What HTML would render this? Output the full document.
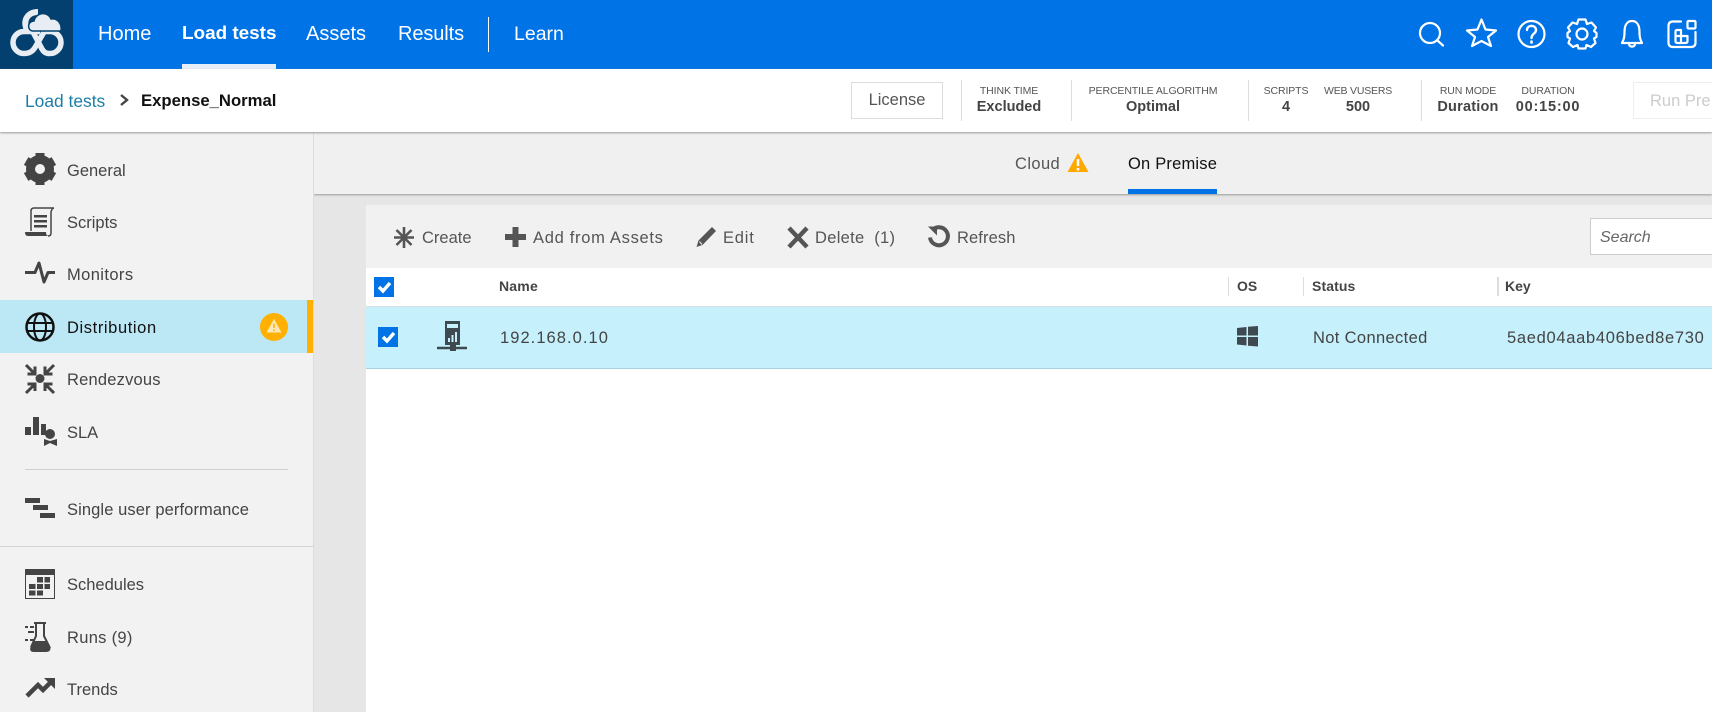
<!DOCTYPE html>
<html><head><meta charset="utf-8"><style>
html,body{margin:0;padding:0;width:1712px;height:712px;overflow:hidden;background:#fff;font-family:"Liberation Sans",Arial,sans-serif}
div,span,svg{position:absolute}
.t{white-space:nowrap;line-height:24px;height:24px}
.nav{color:#fff;font-size:20px;top:22px}
.sb{left:67px;font-size:16.5px;color:#444}
.tb{font-size:16.5px;color:#555;top:226px}
.lab{font-size:10.5px;color:#555;top:79px;transform:translateX(-50%);letter-spacing:-.1px}
.val{font-size:14.5px;color:#444;font-weight:bold;top:95px;transform:translateX(-50%)}
.dv{top:80px;width:1px;height:41px;background:#ddd}
.th{font-size:14px;font-weight:bold;color:#444;top:274px}
.td{font-size:16.5px;color:#444;top:326px}
.hd{top:277px;width:1px;height:19px;background:#ddd}
</style></head><body>
<div style="left:0;top:0;width:1712px;height:69px;background:#0073e7"></div>
<div style="left:0;top:0;width:73px;height:69px;background:#03406f"></div>
<svg style="left:0;top:0" width="73" height="69" viewBox="0 0 73 69" fill="none">
<path d="M27 30 C22 19 29 12 38 12" stroke="#e8edf3" stroke-width="6"/>
<path d="M40 31.500 H24 A11 11 0 0 0 24 53.500 C31 53.500 34 50 37 44 L44 32" stroke="#e8edf3" stroke-width="5.500"/>
<path d="M33 32 L42 49 C44 52.500 46 53.500 50 53.500 A11 11 0 0 0 50 31.500 H44" stroke="#e8edf3" stroke-width="5.500"/>
<path d="M33 31 C27 31 27 21 34 21 C36 12 48 11 51 19 C58 18 62 24 61 31 Z" fill="#e8edf3" stroke="#03406f" stroke-width="1.500"/>
</svg>
<span class="t nav" style="left:98px">Home</span>
<span class="t nav" style="left:182px;font-weight:bold;font-size:18.9px">Load tests</span>
<span class="t nav" style="left:306px">Assets</span>
<span class="t nav" style="left:398px;letter-spacing:-.1px">Results</span>
<div style="left:488px;top:17px;width:1px;height:35px;background:#fff"></div>
<span class="t nav" style="left:514px;font-size:19.5px">Learn</span>
<div style="left:182px;top:64px;width:94px;height:5px;background:#e6eef8"></div>
<svg style="left:1410px;top:10px" width="300" height="50" viewBox="0 0 300 50" fill="none" stroke="#fff" stroke-width="2.200" stroke-linejoin="round" stroke-linecap="round">
<circle cx="20" cy="23" r="10"/><path d="M27.500 30.500 L33 35.500"/>
<path d="M71.500 9.500 L75.500 19.500 L86 20.500 L78 27 L81 36 L71.500 31 L62 36 L65 27 L57 20.500 L67.500 19.500 Z"/>
<circle cx="121.500" cy="24" r="13"/>
<path d="M117 20 C117 14.500 126 14.500 126 20 C126 24 121.500 23.500 121.500 28" stroke-width="2.400"/><path d="M121.500 31.500 V32.500" stroke-width="2.600"/>
<circle cx="172" cy="24" r="5.500"/>
<path d="M168.500 9.500 H175.500 L177 14 L181.500 12.500 L186 17.500 L184 21 L186.500 23 V27 L184 28.500 L185.500 33 L181 37 L176.500 35 L175.500 38.500 H168.500 L167.500 35 L163 37 L158.500 33 L160 28.500 L157.500 27 V23 L160 21 L158 17.500 L162.500 12.500 L167 14 Z"/>
<path d="M222 11 C216 11 214.500 17 214.500 22 C214.500 28 213.500 30 212 33 H232 C230.500 30 229.500 28 229.500 22 C229.500 17 228 11 222 11 Z"/><path d="M219 34 C219 37.500 225 37.500 225 34"/>
<path d="M271 11.500 H263 Q258.500 11.500 258.500 16 V32.500 Q258.500 37 263 37 H281 Q285.500 37 285.500 32.500 V22"/>
<rect x="277.500" y="11" width="8" height="7.500" rx="1"/>
<path d="M265.500 25 V21.500 Q265.500 20 267.500 20 H271 V33 H267.500 Q265.500 33 265.500 31 V26 H277.500 V31 Q277.500 33 275.500 33 H271"/>
</svg>

<div style="left:0;top:69px;width:1712px;height:63px;background:#fff;box-shadow:0 1px 2px #999;z-index:2">
</div>
<div style="left:0;top:0;width:1712px;height:140px;z-index:3">
<span class="t" style="left:25px;top:89px;font-size:17.4px;color:#1b7ea6">Load tests</span>
<svg style="left:118px;top:92px" width="12" height="16" fill="none" stroke="#444" stroke-width="2.400"><path d="M3 3 L9 8 L3 13"/></svg>
<span class="t" style="left:141px;top:89px;font-size:16.7px;font-weight:bold;color:#111">Expense_Normal</span>
<div style="left:851px;top:82px;width:90px;height:35px;border:1px solid #ddd;text-align:center;line-height:35px;color:#555;font-size:16.5px">License</div>
<div class="dv" style="left:961px"></div><div class="dv" style="left:1071px"></div><div class="dv" style="left:1248px"></div><div class="dv" style="left:1421px"></div>
<span class="t lab" style="left:1009px">THINK TIME</span><span class="t val" style="left:1009px">Excluded</span>
<span class="t lab" style="left:1153px">PERCENTILE ALGORITHM</span><span class="t val" style="left:1153px">Optimal</span>
<span class="t lab" style="left:1286px">SCRIPTS</span><span class="t val" style="left:1286px">4</span>
<span class="t lab" style="left:1358px;letter-spacing:-.2px">WEB VUSERS</span><span class="t val" style="left:1358px">500</span>
<span class="t lab" style="left:1468px">RUN MODE</span><span class="t val" style="left:1468px;letter-spacing:.2px">Duration</span>
<span class="t lab" style="left:1548px">DURATION</span><span class="t val" style="left:1548px;letter-spacing:.8px">00:15:00</span>
<div style="left:1633px;top:82px;width:100px;height:35px;border:1px solid #eee"></div>
<span class="t" style="left:1650px;top:89px;font-size:16.5px;color:#ccc">Run Pre</span>
</div>

<div style="left:314px;top:132px;width:1398px;height:580px;background:#e6e6e6"></div>
<div style="left:314px;top:132px;width:1398px;height:62px;background:#f0f0f0;box-shadow:0 1px 2px #999"></div>
<span class="t" style="left:1015px;top:152px;font-size:16.5px;color:#555;letter-spacing:.4px">Cloud</span>
<svg style="left:1067px;top:152px" width="22" height="21"><path d="M11 1 L21.500 20 H.500 Z" fill="#ffa800"/><path d="M11 7 V14 M11 16 V18.500" stroke="#fff" stroke-width="2.500"/></svg>
<span class="t" style="left:1128px;top:152px;font-size:16.5px;color:#111;letter-spacing:.2px">On Premise</span>
<div style="left:1128px;top:189px;width:89px;height:5px;background:#0073e7"></div>

<div style="left:0;top:132px;width:313px;height:580px;background:#f2f2f2;border-right:1px solid #ddd"></div>
<div style="left:0;top:300px;width:307px;height:53px;background:#bce8f6"></div>
<div style="left:307px;top:300px;width:6px;height:53px;background:#ffb000"></div>
<div style="left:25px;top:469px;width:263px;height:1px;background:#d0d0d0"></div>
<div style="left:0;top:546px;width:313px;height:1px;background:#d4d4d4"></div>
<span class="t sb" style="top:159px">General</span>
<span class="t sb" style="top:211px">Scripts</span>
<span class="t sb" style="top:263px;letter-spacing:.4px">Monitors</span>
<span class="t sb" style="top:316px;color:#111;letter-spacing:.6px">Distribution</span>
<span class="t sb" style="top:368px;letter-spacing:.2px">Rendezvous</span>
<span class="t sb" style="top:421px">SLA</span>
<span class="t sb" style="top:498px;letter-spacing:.1px">Single user performance</span>
<span class="t sb" style="top:573px">Schedules</span>
<span class="t sb" style="top:626px;letter-spacing:.3px">Runs (9)</span>
<span class="t sb" style="top:678px">Trends</span>
<svg style="left:0;top:132px" width="313" height="580" viewBox="0 132 313 580" fill="#444">
<circle cx="40" cy="169" r="9.500" fill="none" stroke="#444" stroke-width="9"/>
<g transform="translate(40 169)"><rect x="-4.500" y="-16" width="9" height="6"/><rect x="-4.500" y="-16" width="9" height="6" transform="rotate(60)"/><rect x="-4.500" y="-16" width="9" height="6" transform="rotate(120)"/><rect x="-4.500" y="-16" width="9" height="6" transform="rotate(180)"/><rect x="-4.500" y="-16" width="9" height="6" transform="rotate(240)"/><rect x="-4.500" y="-16" width="9" height="6" transform="rotate(300)"/></g>
<path d="M34 208 H54 Q52 208 51 212 V233 Q51 236 48 236 M31 231 V211 Q31 208 34 208" fill="none" stroke="#444" stroke-width="1.500"/>
<path d="M25 232 H46 Q46 236 49 236 H28 Q25 236 25 232 Z"/><path d="M34 215 H47 V217.500 H34 Z M34 220 H47 V222.500 H34 Z M34 225 H47 V227.500 H34 Z"/>
<path d="M25 272.500 H35 L39 263 L44 282 L48 272.500 H55" fill="none" stroke="#444" stroke-width="3" stroke-linejoin="round"/>
<circle cx="40" cy="327" r="13.500" fill="none" stroke="#111" stroke-width="2.500"/><ellipse cx="40" cy="327" rx="6" ry="13.500" fill="none" stroke="#111" stroke-width="2"/><path d="M27 323 H53 M27 331 H53" stroke="#111" stroke-width="2"/>
<circle cx="274" cy="327" r="14" fill="#ffb000"/><path d="M274 319 L281.500 332.500 H266.500 Z" fill="#fde9b8"/><path d="M274 323.500 V328 M274 329.500 V331" stroke="#ffb000" stroke-width="1.500"/>
<circle cx="40" cy="378.500" r="4.500"/>
<g fill="none" stroke="#444" stroke-width="3"><path d="M26 365 L35 374 M35 366.500 V374 H27.500 M54 365 L45 374 M45 366.500 V374 H52.500 M26 393 L35 384 M35 391 V384 H27.500 M54 393 L45 384 M45 391 V384 H52.500"/></g>
<path d="M25 427 H31 V435 H25 Z M33 417 H39 V435 H33 Z M41 424 H46 V435 H41 Z"/><circle cx="50" cy="434" r="5"/><path d="M44 446 V439 L50 441 L57 439 V446 L50 443 Z"/>
<path d="M25 498 H40 V503 H25 Z M33 505 H48 V510 H33 Z M40 513 H55 V518 H40 Z"/>
<rect x="25.500" y="569.500" width="29" height="29" fill="none" stroke="#444"/><path d="M25 569 H55 V575 H25 Z"/>
<path d="M37 577 H43 V582.500 H37 Z M44.500 577 H50 V582.500 H44.500 Z M29 584 H35.500 V589 H29 Z M37 584 H43 V589 H37 Z M44.500 584 H50 V589 H44.500 Z M29 590.500 H35.500 V595.500 H29 Z M37 590.500 H43 V595.500 H37 Z"/>
<path d="M34 623 H46 M36 623 V636 L31 647 M44 623 V636 L50 648" fill="none" stroke="#444" stroke-width="2"/><path d="M34 641 H47 L50.500 648 Q50.500 652 46 652 H34 Q29 652 30.500 647 Z"/>
<path d="M25 626 H28 V628 H25 Z M30 626 H34 V628 H30 Z M28 631 H34 V633 H28 Z M25 639 H28 V641 H25 Z M30 639 H35 V641 H30 Z"/>
<path d="M27 696 L38 685 L43 690 L52 681" fill="none" stroke="#444" stroke-width="4.500"/><path d="M44 678 H55 V689 Z"/>
</svg>

<div style="left:366px;top:205px;width:1346px;height:507px;background:#fff"></div>
<div style="left:366px;top:205px;width:1346px;height:63px;background:#f1f1f1"></div>
<div style="left:366px;top:306px;width:1346px;height:63px;background:#c5f0fc;border-top:1px solid #ddd;border-bottom:1px solid #a9d3df;box-sizing:border-box"></div>
<span class="t tb" style="left:422px">Create</span>
<span class="t tb" style="left:533px;letter-spacing:.7px">Add from Assets</span>
<span class="t tb" style="left:723px;letter-spacing:.8px">Edit</span>
<span class="t tb" style="left:815px;letter-spacing:.3px">Delete&nbsp; (1)</span>
<span class="t tb" style="left:957px;letter-spacing:.1px">Refresh</span>
<svg style="left:385px;top:220px" width="640" height="40" fill="none" stroke="#555">
<path d="M19 7 V28 M9 17.500 H29 M11.500 10 L26.500 25 M26.500 10 L11.500 25" stroke-width="2.600"/>
<path d="M120 17 H141 M130.500 7 V27" stroke-width="6"/>
<path d="M311.500 27 L313.500 20.500 L327 7 L331 11 L317.500 25 Z" fill="#555" stroke="none"/><path d="M314.500 21.500 L317 24.500" stroke="#f1f1f1" stroke-width="1"/>
<path d="M404 8 L422 27 M422 8 L404 27" stroke-width="4.500"/>
<path d="M548 9.500 A9 9 0 1 1 545 17.500" stroke-width="4"/><path d="M543 6.500 H552 V15.500 Z" fill="#555" stroke="none"/>
</svg>
<div style="left:1590px;top:218px;width:130px;height:35px;background:#fff;border:1px solid #ccc"></div>
<span class="t" style="left:1600px;top:226px;font-size:16px;font-style:italic;color:#666">Search</span>

<svg style="left:370px;top:270px" width="110" height="90" fill="none">
<rect x="4" y="7" width="20" height="20" fill="#0073e7"/><path d="M9 17 L13 21 L20 13" stroke="#fff" stroke-width="3.500"/>
<rect x="8" y="57" width="20" height="20" fill="#0073e7"/><path d="M13 67 L17 71 L24 63" stroke="#fff" stroke-width="3.500"/>
<path d="M75 51 H90 V75 H75 Z" fill="#3f4a50"/><rect x="77" y="54" width="11" height="4" fill="#c5f0fc"/><path d="M78 72 V68 H80 V72 Z M81.500 72 V65 H83.500 V72 Z M85 72 V62 H87 V72 Z" fill="#c5f0fc"/>
<path d="M67 78 H97" stroke="#3f4a50" stroke-width="2.500"/><rect x="80" y="75" width="6" height="6" fill="#3f4a50"/>
</svg>
<span class="t th" style="left:499px;letter-spacing:.2px">Name</span>
<span class="t th" style="left:1237px">OS</span>
<span class="t th" style="left:1312px;letter-spacing:.1px">Status</span>
<span class="t th" style="left:1505px">Key</span>
<div class="hd" style="left:1228px"></div><div class="hd" style="left:1303px"></div><div class="hd" style="left:1497px;width:2px"></div>
<span class="t td" style="left:500px;letter-spacing:1.050px">192.168.0.10</span>
<svg style="left:1237px;top:326px" width="22" height="21"><path d="M0 2 L9.500 1 V9.500 H0 Z M11 .8 L21 0 V9.500 H11 Z M0 11 H9.500 V19.500 L0 18.500 Z M11 11 H21 V20.500 L11 19.700 Z" fill="#3f4a50"/></svg>
<span class="t td" style="left:1313px;letter-spacing:.35px">Not Connected</span>
<span class="t td" style="left:1507px;letter-spacing:.7px">5aed04aab406bed8e730</span>
</body></html>
